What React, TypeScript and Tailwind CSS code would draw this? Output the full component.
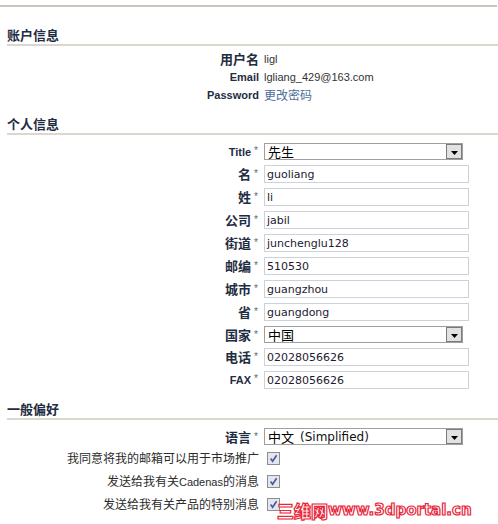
import React from "react";

const SANS = "font-['Liberation_Sans','Noto_Sans_CJK_SC',sans-serif]";
const CJK = "font-['Noto_Sans_CJK_SC','Liberation_Sans',sans-serif]";
const VERDANA = "font-['DejaVu_Sans','Noto_Sans_CJK_SC',sans-serif]";

function SectionTitle({ children, className = "" }: { children: React.ReactNode; className?: string }) {
  return (
    <div
      className={`ml-[7px] h-[19px] border-b-2 border-[#dbd7cf] pb-px text-[13px] leading-[16px] font-bold text-[#1f2d42] ${CJK} ${className}`}
    >
      {children}
    </div>
  );
}

function Row({
  label,
  required,
  latin,
  children,
}: {
  label: string;
  required?: boolean;
  latin?: boolean;
  children: React.ReactNode;
}) {
  return (
    <div className="grid grid-cols-[259px_1fr] items-center gap-x-[5px] leading-[16px]">
      <div
        className={`h-[16px] text-right leading-[16px] font-bold text-[#1f2d42] whitespace-nowrap ${
          latin ? `${SANS} text-[11px]` : `${CJK} text-[13px]`
        }`}
      >
        {label}
        {required && (
          <span className={`relative -top-[2px] ml-[3px] mr-px text-[10px] font-normal text-[#5c6b7c] ${SANS}`}>*</span>
        )}
      </div>
      <div className="flex items-center">{children}</div>
    </div>
  );
}

function TextBox({ value }: { value: string }) {
  return (
    <div
      className={`flex h-[18px] w-[205px] items-center border border-[#ccd1da] bg-white pl-[2px] text-[11px] leading-none text-[#1c1a30] ${VERDANA}`}
    >
      {value}
    </div>
  );
}

function DropDown({ children }: { children: React.ReactNode }) {
  return (
    <div
      className={`relative flex h-[17px] w-[199px] items-center border border-[#9f9f9f] bg-white pl-[3px] text-[13px] leading-none text-black ${CJK}`}
    >
      {children}
      <span className="absolute top-0 right-0 bottom-0 flex w-[16px] items-end justify-center border border-[#7b7b7b] bg-[#e2e2e2] pb-[3px]">
        <svg width="7" height="4" viewBox="0 0 7 4">
          <path d="M0 0h7L3.5 4z" fill="#000" />
        </svg>
      </span>
    </div>
  );
}

function CheckRow({ children }: { children: React.ReactNode }) {
  return (
    <div className="grid h-[18px] grid-cols-[259px_1fr] items-center gap-x-[5px]">
      <div className={`h-[16px] text-right text-[12px] leading-[16px] whitespace-nowrap text-[#2b2b2b] ${CJK}`}>
        {children}
      </div>
      <span className="ml-[3px] flex h-[13px] w-[13px] items-center justify-center border border-[#8e8e8e] bg-[#e3e6ee]">
        <svg width="9" height="9" viewBox="0 0 9 9">
          <path d="M1.6 4.6l2 2.6L7.6 1.2" stroke="#4b5c9a" strokeWidth="1.7" fill="none" />
        </svg>
      </span>
    </div>
  );
}

export default function App() {
  const personal: [string, string][] = [
    ["名", "guoliang"],
    ["姓", "li"],
    ["公司", "jabil"],
    ["街道", "junchenglu128"],
    ["邮编", "510530"],
    ["城市", "guangzhou"],
    ["省", "guangdong"],
  ];

  return (
    <div className="relative h-[524px] w-[498px] overflow-hidden bg-white">
      <div className="pt-[5px]">
        <div className="mr-px h-[2px] bg-[#cbc4bc]" />
      </div>

      <SectionTitle className="mt-[20px]">账户信息</SectionTitle>
      <div className="mt-[5px] flex flex-col">
        <div className="h-[18px]">
          <Row label="用户名">
            <span className={`text-[11px] text-[#333] ${SANS}`}>ligl</span>
          </Row>
        </div>
        <div className="h-[18px]">
          <Row label="Email" latin>
            <span className={`text-[11px] text-[#333] ${SANS}`}>lgliang_429@163.com</span>
          </Row>
        </div>
        <div className="h-[18px]">
          <Row label="Password" latin>
            <span className={`text-[12px] text-[#4d6d9a] ${CJK}`}>更改密码</span>
          </Row>
        </div>
      </div>

      <SectionTitle className="mt-[11px]">个人信息</SectionTitle>
      <div className="mt-[8px] flex flex-col gap-[5px]">
        <Row label="Title" required latin>
          <DropDown>先生</DropDown>
        </Row>
        {personal.map(([label, value]) => (
          <Row key={label} label={label} required>
            <TextBox value={value} />
          </Row>
        ))}
        <Row label="国家" required>
          <DropDown>中国</DropDown>
        </Row>
        <Row label="电话" required>
          <TextBox value="02028056626" />
        </Row>
        <Row label="FAX" required latin>
          <TextBox value="02028056626" />
        </Row>
      </div>

      <SectionTitle className="mt-[12px]">一般偏好</SectionTitle>
      <div className="mt-[8px]">
        <Row label="语言" required>
          <DropDown>
            中文 <span className={`ml-[6px] text-[12px] text-[#111] ${VERDANA}`}>(Simplified)</span>
          </DropDown>
        </Row>
      </div>
      <div className="mt-[4px] flex flex-col gap-[5px]">
        <CheckRow>我同意将我的邮箱可以用于市场推广</CheckRow>
        <CheckRow>
          发送给我有关<span className={`text-[11px] ${SANS}`}>Cadenas</span>的消息
        </CheckRow>
        <CheckRow>发送给我有关产品的特别消息</CheckRow>
      </div>

      {/* site stamp over the bottom-right corner */}
      <div
        className={`absolute top-[502px] left-[277px] flex items-center whitespace-nowrap font-bold text-white [-webkit-text-stroke:1.2px_#e8263a] ${VERDANA}`}
      >
        <span className={`text-[17px] leading-none font-black ${CJK}`}>三维网</span>
        <span className="text-[15px] leading-none">www.3dportal.cn</span>
      </div>
    </div>
  );
}
